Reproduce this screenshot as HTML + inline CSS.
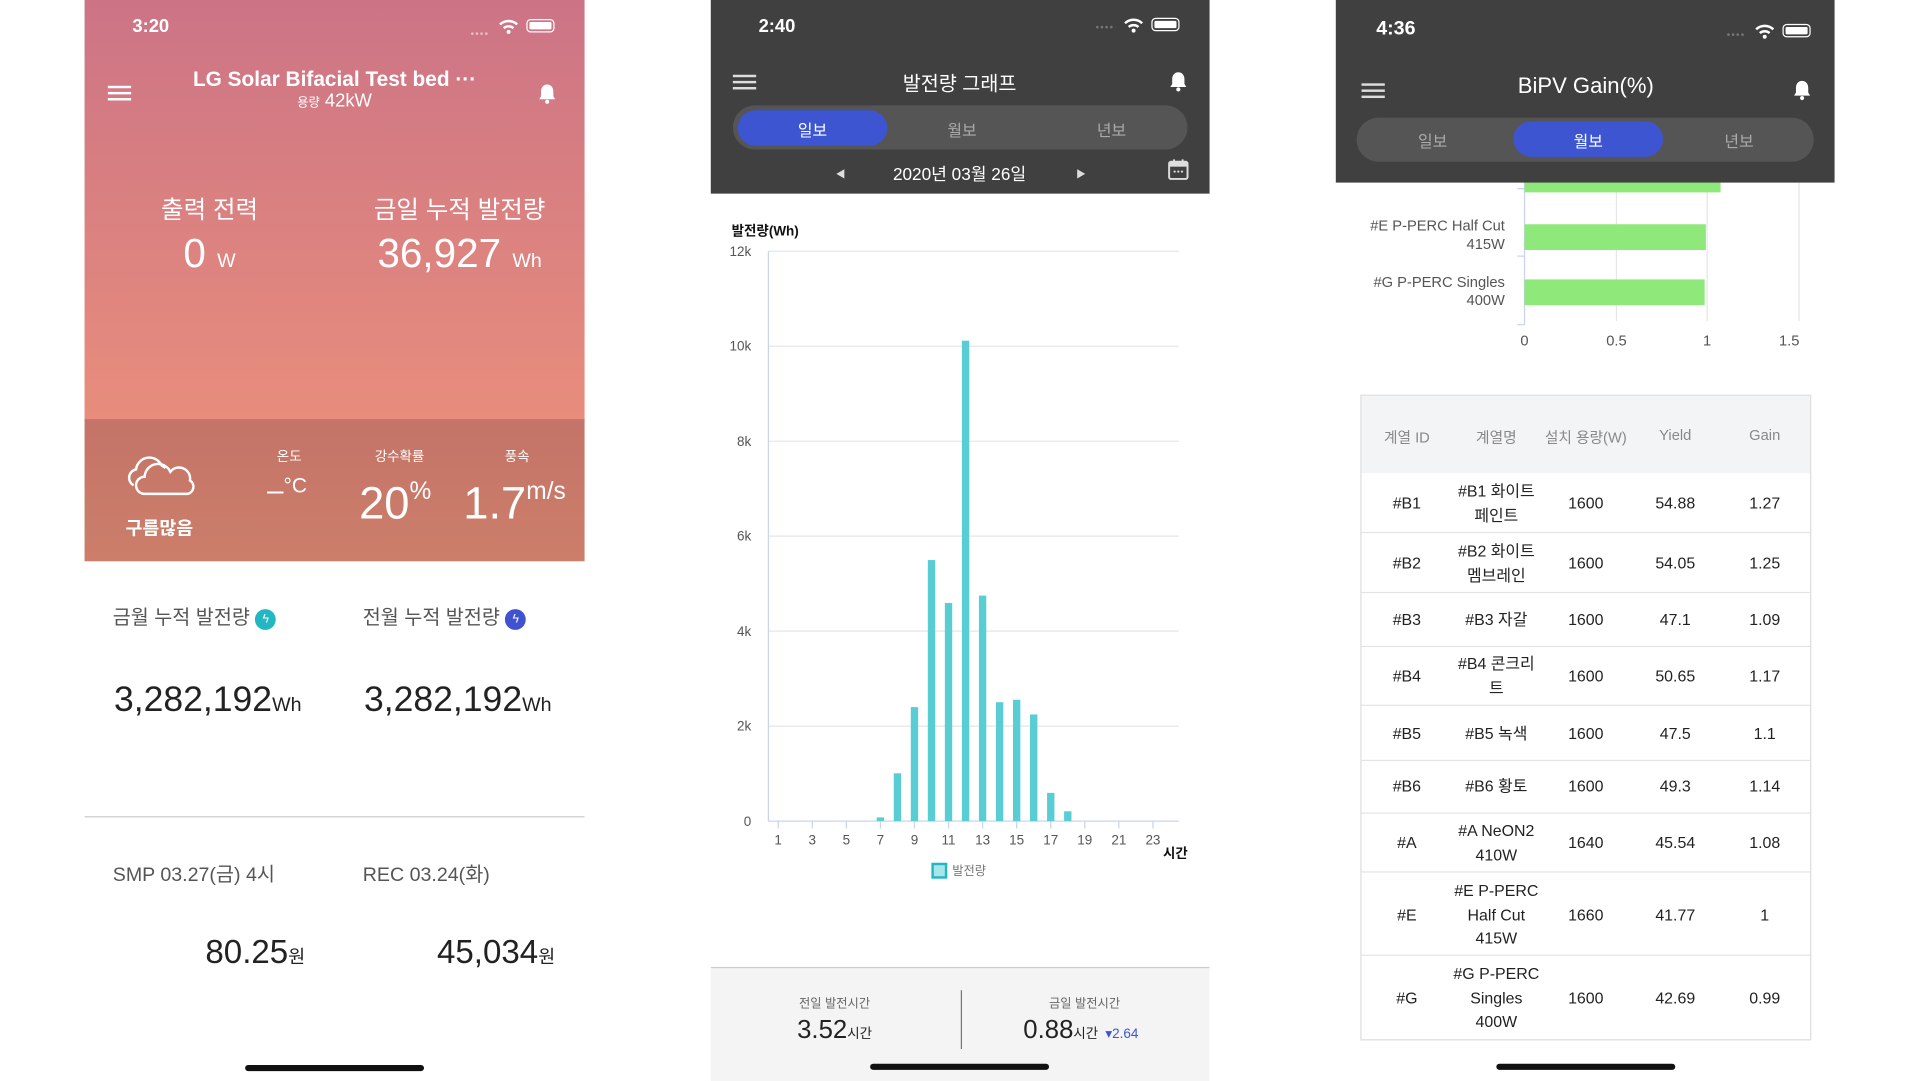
<!DOCTYPE html>
<html><head><meta charset="utf-8"><style>
*{margin:0;padding:0;box-sizing:border-box}
html,body{width:1920px;height:1080px;overflow:hidden;background:#fff}
body{font-family:"Liberation Sans","Noto Sans CJK KR",sans-serif}
#w{position:absolute;left:0;top:0;width:1566px;height:882px;transform:scale(1.2255);transform-origin:0 0}
.a{position:absolute;white-space:nowrap}
.c{transform:translateX(-50%)}
.r{transform:translateX(-100%)}
.ham{position:absolute;width:19px;height:12px;border-top:2px solid;border-bottom:2px solid}
.ham:after{content:"";position:absolute;left:0;right:0;top:3px;border-top:2px solid}
.home{position:absolute;height:5px;width:146px;border-radius:3px;background:#111}
</style></head><body><div id="w">

<!-- PANEL 1 -->
<div class="a" style="left:69px;top:0;width:408px;height:343px;background:linear-gradient(#cc7486,#e88d7c)"></div>
<div class="a" style="left:69px;top:342px;width:408px;height:116px;background:linear-gradient(#c47468,#cc7e6a)"></div>
<div class="a" style="left:108px;top:13px;color:#fff;font-size:15px;font-weight:bold">3:20</div>
<div class="a" style="left:384px;top:23px;color:rgba(255,255,255,.5);font-size:8px;letter-spacing:1px">••••</div>
<svg class="a" style="left:406px;top:14px" width="50" height="14"><path d="M2 6a10 10 0 0 1 14 0M5 9a6 6 0 0 1 8 0" stroke="#fff" stroke-width="2" fill="none"/><circle cx="9" cy="12" r="1.6" fill="#fff"/><rect x="24" y="2" width="22" height="10" rx="3" stroke="#fff" fill="none"/><rect x="26" y="4" width="18" height="6" rx="1" fill="#fff"/></svg>
<div class="ham" style="left:88px;top:70px;color:#fff"></div>
<div class="a c" style="left:273px;top:55px;color:#fff;font-size:17px;font-weight:bold">LG Solar Bifacial Test bed ···</div>
<div class="a c" style="left:273px;top:74px;color:#fff;font-size:15px"><span style="font-size:10px">용량</span> 42kW</div>
<svg class="a" style="left:439px;top:68px" width="15" height="18"><path d="M7.5 1c-3 0-5 2.5-5 5.5v4L1 13h13l-1.5-2.5v-4C12.5 3.5 10.5 1 7.5 1z" fill="#fff"/><circle cx="7.5" cy="15" r="1.7" fill="#fff"/></svg>
<div class="a c" style="left:171px;top:155px;color:#fff;font-size:20px">출력 전력</div>
<div class="a c" style="left:375px;top:155px;color:#fff;font-size:20px">금일 누적 발전량</div>
<div class="a c" style="left:171px;top:188px;color:#fff;font-size:33px">0 <span style="font-size:16px">W</span></div>
<div class="a c" style="left:375px;top:188px;color:#fff;font-size:33px">36,927 <span style="font-size:16px">Wh</span></div>
<svg class="a" style="left:100px;top:370px" width="62" height="36"><path d="M9 26a7 7 0 0 1 2-13 11 11 0 0 1 21-3 8 8 0 0 1 3 2" stroke="#fff" stroke-width="2" fill="none"/><path d="M18 33a7 7 0 0 1 0-14 11 11 0 0 1 21-4 9 9 0 0 1 16 7 6 6 0 0 1 -2 11z" stroke="#fff" stroke-width="2" fill="none"/></svg>
<div class="a c" style="left:130px;top:420px;color:#fff;font-size:15px;font-weight:bold">구름많음</div>
<div class="a c" style="left:236px;top:364px;color:#fff;font-size:11px">온도</div>
<div class="a c" style="left:326px;top:364px;color:#fff;font-size:11px">강수확률</div>
<div class="a c" style="left:422px;top:364px;color:#fff;font-size:11px">풍속</div>
<div class="a" style="left:218px;top:387px;color:#fff;font-size:24px">–<span style="font-size:17px;vertical-align:top">°C</span></div>
<div class="a" style="left:293px;top:390px;color:#fff;font-size:37px">20<span style="font-size:20px;vertical-align:top">%</span></div>
<div class="a" style="left:378px;top:390px;color:#fff;font-size:37px">1.7<span style="font-size:20px;vertical-align:top">m/s</span></div>
<div class="a" style="left:92px;top:490px;color:#555;font-size:16px">금월 누적 발전량 <span style="display:inline-block;width:17px;height:17px;border-radius:50%;background:#22b7c2;color:#fff;font-size:10px;text-align:center;line-height:17px;vertical-align:1px">ϟ</span></div>
<div class="a" style="left:296px;top:490px;color:#555;font-size:16px">전월 누적 발전량 <span style="display:inline-block;width:17px;height:17px;border-radius:50%;background:#3f52cf;color:#fff;font-size:10px;text-align:center;line-height:17px;vertical-align:1px">ϟ</span></div>
<div class="a" style="left:93px;top:555px;color:#222;font-size:29px">3,282,192<span style="font-size:16px">Wh</span></div>
<div class="a" style="left:297px;top:555px;color:#222;font-size:29px">3,282,192<span style="font-size:16px">Wh</span></div>
<div class="a" style="left:69px;top:666px;width:408px;height:1px;background:#ccc"></div>
<div class="a" style="left:92px;top:700px;color:#555;font-size:16px">SMP 03.27(금) 4시</div>
<div class="a" style="left:296px;top:700px;color:#555;font-size:16px">REC 03.24(화)</div>
<div class="a r" style="left:249px;top:762px;color:#222;font-size:27px">80.25<span style="font-size:15px">원</span></div>
<div class="a r" style="left:453px;top:762px;color:#222;font-size:27px">45,034<span style="font-size:15px">원</span></div>
<div class="home" style="left:200px;top:869px"></div>

<!-- PANEL 2 -->
<div class="a" style="left:580px;top:0;width:407px;height:158px;background:#404040"></div>
<div class="a" style="left:619px;top:13px;color:#fff;font-size:15px;font-weight:bold">2:40</div>
<div class="a" style="left:894px;top:18px;color:#777;font-size:8px;letter-spacing:1px">••••</div>
<svg class="a" style="left:916px;top:13px" width="50" height="14"><path d="M2 6a10 10 0 0 1 14 0M5 9a6 6 0 0 1 8 0" stroke="#fff" stroke-width="2" fill="none"/><circle cx="9" cy="12" r="1.6" fill="#fff"/><rect x="24" y="2" width="22" height="10" rx="3" stroke="#fff" fill="none"/><rect x="26" y="4" width="18" height="6" rx="1" fill="#fff"/></svg>
<div class="ham" style="left:598px;top:61px;color:#ddd"></div>
<div class="a c" style="left:783px;top:55px;color:#fff;font-size:16px">발전량 그래프</div>
<svg class="a" style="left:954px;top:58px" width="15" height="18"><path d="M7.5 1c-3 0-5 2.5-5 5.5v4L1 13h13l-1.5-2.5v-4C12.5 3.5 10.5 1 7.5 1z" fill="#fff"/><circle cx="7.5" cy="15" r="1.7" fill="#fff"/></svg>
<div class="a" style="left:598px;top:86px;width:371px;height:36px;border-radius:18px;background:#555"></div>
<div class="a" style="left:602px;top:90px;width:122px;height:29px;border-radius:15px;background:#3d55d0"></div>
<div class="a c" style="left:663px;top:96px;color:#fff;font-size:13px">일보</div>
<div class="a c" style="left:785px;top:96px;color:#aaa;font-size:13px">월보</div>
<div class="a c" style="left:907px;top:96px;color:#aaa;font-size:13px">년보</div>
<div class="a" style="left:682px;top:137px;color:#ddd;font-size:8px">◀</div>
<div class="a c" style="left:783px;top:132px;color:#fff;font-size:14px">2020년 03월 26일</div>
<div class="a" style="left:878px;top:137px;color:#ddd;font-size:8px">▶</div>
<svg class="a" style="left:953px;top:129px" width="17" height="18"><rect x="1" y="3" width="15" height="14" rx="1.5" stroke="#ddd" stroke-width="1.6" fill="none"/><rect x="1" y="3" width="15" height="4" fill="#ddd"/><path d="M5 1v3M12 1v3" stroke="#ddd" stroke-width="1.6"/><circle cx="5.5" cy="11" r=".9" fill="#ddd"/><circle cx="8.5" cy="11" r=".9" fill="#ddd"/><circle cx="11.5" cy="11" r=".9" fill="#ddd"/></svg>
<div class="a" style="left:597px;top:180px;color:#111;font-size:11px;font-weight:bold">발전량(Wh)</div>
<svg class="a" style="left:580px;top:190px" width="407" height="540">
<g stroke="#e6e6e6" stroke-width="1"><path d="M47 15H382M47 92.5H382M47 170H382M47 247.5H382M47 325H382M47 402.5H382"/></g>
<path d="M47 15V480H382" stroke="#c8d4ec" fill="none"/>
<g stroke="#c8d4ec"><path d="M55 480v6M82.8 480v6M110.6 480v6M138.4 480v6M166.2 480v6M194 480v6M221.8 480v6M249.6 480v6M277.4 480v6M305.2 480v6M333 480v6M360.8 480v6"/></g>
<g fill="#58cdd3">
<rect x="135.4" y="477" width="6" height="3"/>
<rect x="149.3" y="441" width="6" height="39"/>
<rect x="163.2" y="387" width="6" height="93"/>
<rect x="177.1" y="267" width="6" height="213"/>
<rect x="191" y="302" width="6" height="178"/>
<rect x="204.9" y="88" width="6" height="392"/>
<rect x="218.8" y="296" width="6" height="184"/>
<rect x="232.7" y="383" width="6" height="97"/>
<rect x="246.6" y="381" width="6" height="99"/>
<rect x="260.5" y="393" width="6" height="87"/>
<rect x="274.4" y="457" width="6" height="23"/>
<rect x="288.3" y="472" width="6" height="8"/>
</g>
<g font-family="Liberation Sans" font-size="11" fill="#555" text-anchor="end"><text x="33" y="19">12k</text><text x="33" y="96">10k</text><text x="33" y="174">8k</text><text x="33" y="251">6k</text><text x="33" y="329">4k</text><text x="33" y="406">2k</text><text x="33" y="484">0</text></g>
<g font-family="Liberation Sans" font-size="11" fill="#555" text-anchor="middle"><text x="55" y="499">1</text><text x="82.8" y="499">3</text><text x="110.6" y="499">5</text><text x="138.4" y="499">7</text><text x="166.2" y="499">9</text><text x="194" y="499">11</text><text x="221.8" y="499">13</text><text x="249.6" y="499">15</text><text x="277.4" y="499">17</text><text x="305.2" y="499">19</text><text x="333" y="499">21</text><text x="360.8" y="499">23</text></g>
<text x="369" y="510" font-family="Liberation Sans,Noto Sans CJK KR" font-size="11" font-weight="bold" fill="#111">시간</text>
<rect x="181" y="515" width="11" height="11" fill="#a6e6ea" stroke="#22b7c2" stroke-width="2"/>
<text x="197" y="524" font-family="Liberation Sans,Noto Sans CJK KR" font-size="10" fill="#777">발전량</text>
</svg>
<div class="a" style="left:580px;top:789px;width:407px;height:93px;background:#f4f4f4;border-top:1px solid #ccc"></div>
<div class="a c" style="left:681px;top:810px;color:#666;font-size:10px">전일 발전시간</div>
<div class="a c" style="left:681px;top:829px;color:#222;font-size:21px">3.52<span style="font-size:11px">시간</span></div>
<div class="a" style="left:784px;top:808px;width:1px;height:48px;background:#777"></div>
<div class="a c" style="left:885px;top:810px;color:#666;font-size:10px">금일 발전시간</div>
<div class="a" style="left:835px;top:829px;color:#222;font-size:21px">0.88<span style="font-size:11px">시간</span> <span style="font-size:11px;color:#3d55d0">▾2.64</span></div>
<div class="home" style="left:710px;top:868px"></div>

<!-- PANEL 3 -->
<svg class="a" style="left:1090px;top:140px" width="407" height="150">
<path d="M154 8V125" stroke="#c8d4ec"/>
<g stroke="#e6e6e6"><path d="M229 8V122M303 8V122M378 8V122"/></g>
<g stroke="#c8d4ec"><path d="M148 69h6M148 125h6M148 14h6"/></g>
<g fill="#8fe87a"><rect x="154" y="4" width="160" height="13"/><rect x="154" y="43" width="148" height="21"/><rect x="154" y="88" width="147" height="21"/></g>
<g font-family="Liberation Sans" font-size="12" fill="#555" text-anchor="end"><text x="138" y="48">#E P-PERC Half Cut</text><text x="138" y="63">415W</text><text x="138" y="94">#G P-PERC Singles</text><text x="138" y="109">400W</text></g>
<g font-family="Liberation Sans" font-size="12" fill="#555" text-anchor="middle"><text x="154" y="142">0</text><text x="229" y="142">0.5</text><text x="303" y="142">1</text><text x="370" y="142">1.5</text></g>
</svg>
<div class="a" style="left:1090px;top:0;width:407px;height:149px;background:#404040"></div>
<div class="a" style="left:1123px;top:15px;color:#fff;font-size:16px;font-weight:bold">4:36</div>
<div class="a" style="left:1409px;top:24px;color:#777;font-size:8px;letter-spacing:1px">••••</div>
<svg class="a" style="left:1431px;top:18px" width="50" height="14"><path d="M2 6a10 10 0 0 1 14 0M5 9a6 6 0 0 1 8 0" stroke="#fff" stroke-width="2" fill="none"/><circle cx="9" cy="12" r="1.6" fill="#fff"/><rect x="24" y="2" width="22" height="10" rx="3" stroke="#fff" fill="none"/><rect x="26" y="4" width="18" height="6" rx="1" fill="#fff"/></svg>
<div class="ham" style="left:1111px;top:68px;color:#ddd"></div>
<div class="a c" style="left:1294px;top:60px;color:#fff;font-size:18px">BiPV Gain(%)</div>
<svg class="a" style="left:1463px;top:65px" width="15" height="18"><path d="M7.5 1c-3 0-5 2.5-5 5.5v4L1 13h13l-1.5-2.5v-4C12.5 3.5 10.5 1 7.5 1z" fill="#fff"/><circle cx="7.5" cy="15" r="1.7" fill="#fff"/></svg>
<div class="a" style="left:1107px;top:96px;width:373px;height:36px;border-radius:18px;background:#555"></div>
<div class="a" style="left:1235px;top:99px;width:122px;height:29px;border-radius:15px;background:#3d55d0"></div>
<div class="a c" style="left:1169px;top:105px;color:#aaa;font-size:13px">일보</div>
<div class="a c" style="left:1296px;top:105px;color:#fff;font-size:13px">월보</div>
<div class="a c" style="left:1419px;top:105px;color:#aaa;font-size:13px">년보</div>

<div class="a" style="left:1110px;top:322px;width:368px;height:527px;border:1px solid #ddd"></div>
<div class="a" style="left:1111px;top:323px;width:366px;height:63px;background:#f3f4f6"></div>
<div class="a c" style="left:1148px;top:348px;color:#888;font-size:12px">계열 ID</div>
<div class="a c" style="left:1221px;top:348px;color:#888;font-size:12px">계열명</div>
<div class="a c" style="left:1294px;top:348px;color:#888;font-size:12px">설치 용량(W)</div>
<div class="a c" style="left:1367px;top:348px;color:#888;font-size:12px">Yield</div>
<div class="a c" style="left:1440px;top:348px;color:#888;font-size:12px">Gain</div>
<div style="position:absolute;left:1111px;top:0;width:366px">
<div class="a" style="top:434px;left:0;width:366px;height:1px;background:#e4e4e4"></div>
<div class="a" style="top:483px;left:0;width:366px;height:1px;background:#e4e4e4"></div>
<div class="a" style="top:527px;left:0;width:366px;height:1px;background:#e4e4e4"></div>
<div class="a" style="top:575px;left:0;width:366px;height:1px;background:#e4e4e4"></div>
<div class="a" style="top:620px;left:0;width:366px;height:1px;background:#e4e4e4"></div>
<div class="a" style="top:663px;left:0;width:366px;height:1px;background:#e4e4e4"></div>
<div class="a" style="top:711px;left:0;width:366px;height:1px;background:#e4e4e4"></div>
<div class="a" style="top:779px;left:0;width:366px;height:1px;background:#e4e4e4"></div>
</div>
<div style="position:absolute;left:0;top:0;font-size:13px;color:#222;line-height:19.5px;text-align:center">
<div class="a c" style="left:1148px;top:401px">#B1</div><div class="a c" style="left:1221px;top:391px">#B1 화이트<br>페인트</div><div class="a c" style="left:1294px;top:401px">1600</div><div class="a c" style="left:1367px;top:401px">54.88</div><div class="a c" style="left:1440px;top:401px">1.27</div>
<div class="a c" style="left:1148px;top:450px">#B2</div><div class="a c" style="left:1221px;top:440px">#B2 화이트<br>멤브레인</div><div class="a c" style="left:1294px;top:450px">1600</div><div class="a c" style="left:1367px;top:450px">54.05</div><div class="a c" style="left:1440px;top:450px">1.25</div>
<div class="a c" style="left:1148px;top:496px">#B3</div><div class="a c" style="left:1221px;top:496px">#B3 자갈</div><div class="a c" style="left:1294px;top:496px">1600</div><div class="a c" style="left:1367px;top:496px">47.1</div><div class="a c" style="left:1440px;top:496px">1.09</div>
<div class="a c" style="left:1148px;top:542px">#B4</div><div class="a c" style="left:1221px;top:532px">#B4 콘크리<br>트</div><div class="a c" style="left:1294px;top:542px">1600</div><div class="a c" style="left:1367px;top:542px">50.65</div><div class="a c" style="left:1440px;top:542px">1.17</div>
<div class="a c" style="left:1148px;top:589px">#B5</div><div class="a c" style="left:1221px;top:589px">#B5 녹색</div><div class="a c" style="left:1294px;top:589px">1600</div><div class="a c" style="left:1367px;top:589px">47.5</div><div class="a c" style="left:1440px;top:589px">1.1</div>
<div class="a c" style="left:1148px;top:632px">#B6</div><div class="a c" style="left:1221px;top:632px">#B6 황토</div><div class="a c" style="left:1294px;top:632px">1600</div><div class="a c" style="left:1367px;top:632px">49.3</div><div class="a c" style="left:1440px;top:632px">1.14</div>
<div class="a c" style="left:1148px;top:678px">#A</div><div class="a c" style="left:1221px;top:668px">#A NeON2<br>410W</div><div class="a c" style="left:1294px;top:678px">1640</div><div class="a c" style="left:1367px;top:678px">45.54</div><div class="a c" style="left:1440px;top:678px">1.08</div>
<div class="a c" style="left:1148px;top:737px">#E</div><div class="a c" style="left:1221px;top:717px">#E P-PERC<br>Half Cut<br>415W</div><div class="a c" style="left:1294px;top:737px">1660</div><div class="a c" style="left:1367px;top:737px">41.77</div><div class="a c" style="left:1440px;top:737px">1</div>
<div class="a c" style="left:1148px;top:805px">#G</div><div class="a c" style="left:1221px;top:785px">#G P-PERC<br>Singles<br>400W</div><div class="a c" style="left:1294px;top:805px">1600</div><div class="a c" style="left:1367px;top:805px">42.69</div><div class="a c" style="left:1440px;top:805px">0.99</div>
</div>
<div class="home" style="left:1221px;top:868px"></div>
</div></body></html>
